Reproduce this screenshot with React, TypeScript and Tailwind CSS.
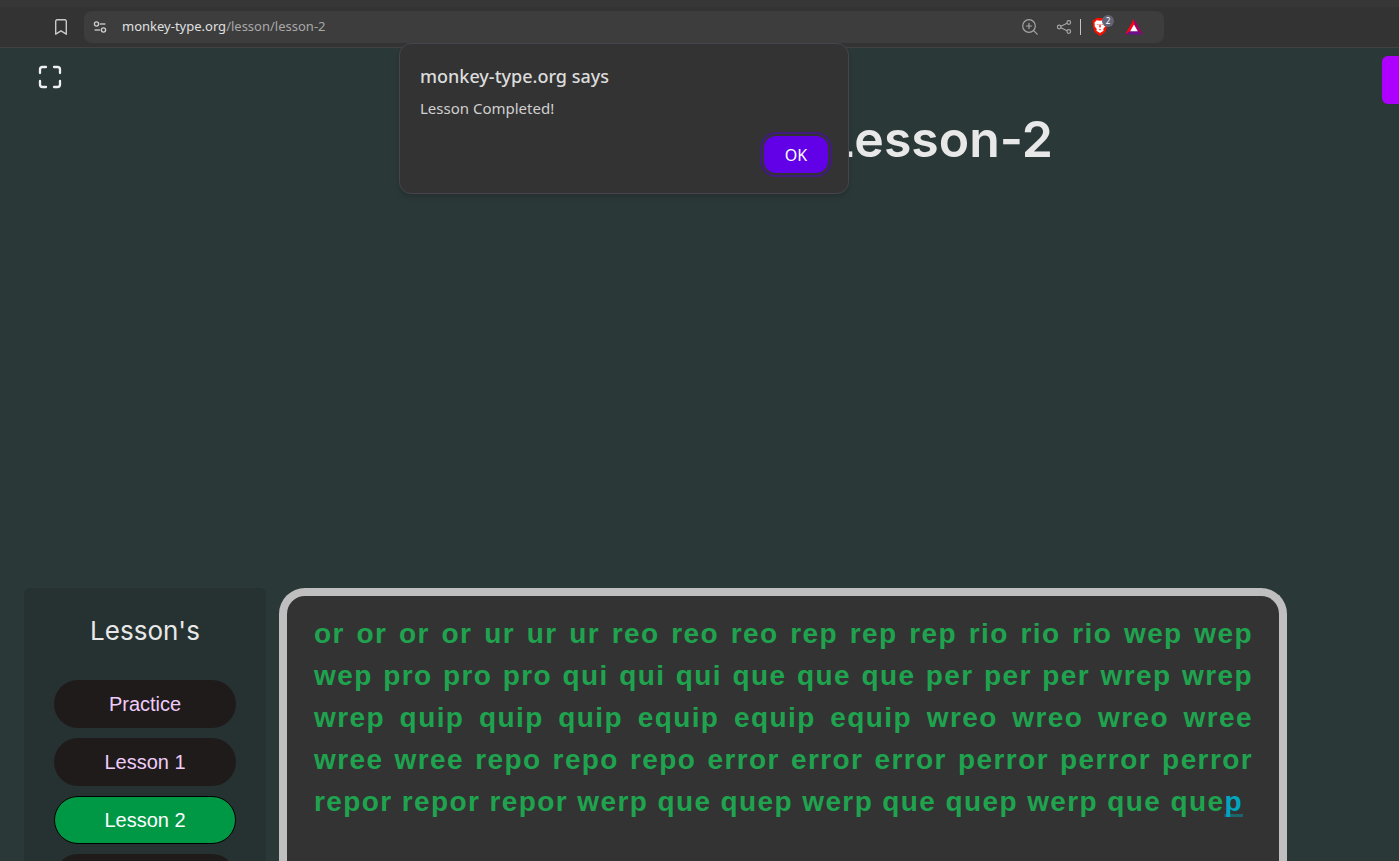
import React from "react";

const lessons = ["Practice", "Lesson 1", "Lesson 2", "Lesson 3"];
const active = "Lesson 2";

const typed =
  "or or or or ur ur ur reo reo reo rep rep rep rio rio rio wep wep wep pro pro pro qui qui qui que que que per per per wrep wrep wrep quip quip quip equip equip equip wreo wreo wreo wree wree wree repo repo repo error error error perror perror perror repor repor repor werp que quep werp que quep werp que que";

function BookmarkIcon() {
  return (
    <svg width="16" height="18" viewBox="0 0 16 18" fill="none" stroke="#c9c9c9" strokeWidth="1.4" strokeLinejoin="round" aria-hidden="true">
      <path d="M2.7 3.2a1.5 1.5 0 0 1 1.5-1.5h7.6a1.5 1.5 0 0 1 1.5 1.5v13L8 12.800l-5.300 3.400z" />
    </svg>
  );
}

function SiteSettingsIcon() {
  return (
    <svg width="14" height="14" viewBox="0 0 14 14" fill="none" stroke="#d0d0d0" strokeWidth="1.3" aria-hidden="true">
      <circle cx="3.5" cy="4" r="2.1" />
      <path d="M6.800 4h5.600" />
      <circle cx="10.5" cy="10" r="2.1" />
      <path d="M1.600 10h5.600" />
    </svg>
  );
}

function ZoomIcon() {
  return (
    <svg width="18" height="18" viewBox="0 0 18 18" fill="none" stroke="#a5a5a5" strokeWidth="1.2" strokeLinecap="round" aria-hidden="true">
      <circle cx="8" cy="8" r="6.3" />
      <path d="M12.600 12.600l3.600 3.600M8 5.400v5.200M5.400 8h5.200" />
    </svg>
  );
}

function ShareIcon() {
  return (
    <svg width="16" height="16" viewBox="0 0 16 16" fill="none" stroke="#a5a5a5" strokeWidth="1.2" aria-hidden="true">
      <circle cx="3.2" cy="8" r="1.8" />
      <circle cx="12.8" cy="3.5" r="1.8" />
      <circle cx="12.8" cy="12.5" r="1.8" />
      <path d="M4.900 7.200l6.200-2.900M4.900 8.800l6.200 2.900" />
    </svg>
  );
}

function BraveIcon() {
  return (
    <svg width="16" height="18" viewBox="0 0 16 18" aria-hidden="true">
      <path fill="#fb1000" d="M4.600 0h6.800l1.600 1.600 1.800.2.800 2.400-.6 1.600.2 2-1.600 5.400-1.400 1.800L8 18l-4.200-3-1.400-1.800L.8 7.800 1 5.800.4 4.200l.8-2.400 1.800-.2z" />
      <path fill="#fff" d="M4.600 2.200l3.400.6 3.400-.6 2.200 2.600-.4 1.900.2 1.500-2.200 2.800.4 1.800L8 15l-3.600-2.200.4-1.800-2.200-2.800.2-1.500-.4-1.900z" />
      <path fill="#fb1000" d="M4.600 6l2 .4-.4.900zM11.400 6l-2 .4.4.9zM7.500 6.200h1l.3 2.900-.8.700-.8-.7zM6.600 11.600L8 11.200l1.400.4L8 12.600z" />
    </svg>
  );
}

function BatIcon() {
  return (
    <svg width="18" height="16" viewBox="0 0 18 16" aria-hidden="true">
      <path fill="#ff0018" d="M9 0v6l-3.500 6L0 15.500z" />
      <path fill="#a3005f" d="M9 0l9 15.500-5.500-3.500L9 6z" />
      <path fill="#6f0f8c" d="M0 15.500L5.500 12h7l5.500 3.500z" />
      <path fill="#fff" d="M9 5.500l3.800 6.700H5.200z" />
    </svg>
  );
}

function FullscreenIcon() {
  return (
    <svg width="24" height="24" viewBox="0 0 24 24" fill="none" stroke="#f0f0f0" strokeWidth="2.3" strokeLinecap="round" strokeLinejoin="round" aria-hidden="true">
      <path d="M8 2H4.500a2.500 2.500 0 0 0-2.500 2.500V8M16 2h3.500a2.500 2.500 0 0 1 2.500 2.500V8M22 16v3.500a2.500 2.500 0 0 1-2.500 2.500H16M8 22H4.500a2.500 2.500 0 0 1-2.500-2.500V16" />
    </svg>
  );
}

function Alert() {
  return (
    <div
      role="alertdialog"
      aria-labelledby="alert-title"
      aria-describedby="alert-text"
      className="absolute left-1/2 top-8 z-10 flex w-[450px] -translate-x-1/2 flex-col rounded-xl border border-[#47444e] bg-[#333333] p-5 shadow-md"
    >
      <h2 id="alert-title" className="text-lg leading-6 font-medium text-[#dcdcdc]">
        monkey-type.org says
      </h2>
      <p id="alert-text" className="mt-2 text-[15px] leading-6 text-[#d0d0d0]">
        Lesson Completed!
      </p>
      <button className="mt-4 h-[37px] w-16 self-end rounded-xl bg-[#6200e8] text-base text-white outline-2 outline-offset-2 outline-[#421b80]">
        OK
      </button>
    </div>
  );
}

function Toolbar() {
  return (
    <header className="shrink-0 border-b border-[#424242] bg-[#333333] font-['Noto_Sans',sans-serif]">
      <div className="h-[7px] bg-[#373737]" />
      <div className="flex items-center py-1 pl-[53px]">
        <button aria-label="Bookmark this page">
          <BookmarkIcon />
        </button>
        <div className="relative mr-[235px] ml-[15px] flex h-8 flex-1 items-center rounded-lg bg-[#3d3d3d] pr-[21px] pl-[9px]">
          <button aria-label="Site information">
            <SiteSettingsIcon />
          </button>
          <a href="#lesson-2" className="ml-[15px] text-[13px] text-[#a8a8a8]">
            <span className="text-[#e0e0e0]">monkey-type.org</span>/lesson/lesson-2
          </a>
          <div className="ml-auto flex items-center">
            <button aria-label="Zoom" className="mr-[17px]">
              <ZoomIcon />
            </button>
            <button aria-label="Share" className="mr-2">
              <ShareIcon />
            </button>
            <div className="mr-[11px] h-4 w-px bg-[#c4c4c4]" />
            <button aria-label="Brave Shields" className="relative mr-[17px]">
              <BraveIcon />
              <span className="absolute -top-[3px] -right-[6px] flex size-3 items-center justify-center rounded-full bg-[#636375] text-[8px] leading-none text-white">
                2
              </span>
            </button>
            <button aria-label="Brave Rewards">
              <BatIcon />
            </button>
          </div>
          <Alert />
        </div>
      </div>
    </header>
  );
}

export default function App() {
  return (
    <div className="flex h-screen flex-col overflow-hidden bg-[#2b3838] font-['Liberation_Sans',Arial,sans-serif]">
      <Toolbar />
      <div className="flex shrink-0 items-start justify-between pt-2 pl-[38px]">
        <button aria-label="Full screen" className="mt-[9px]">
          <FullscreenIcon />
        </button>
        <button aria-label="Menu" className="h-12 w-[17px] rounded-l-md bg-[#ae00ff]" />
      </div>
      <h1 className="shrink-0 pr-[346px] text-right font-['Inter',sans-serif] text-[50px] leading-[70px] font-semibold text-[#e8e8e8]">
        Lesson-2
      </h1>
      <main className="mt-[414px] flex min-h-0 flex-1 items-stretch gap-[13px] pr-28 pl-6">
        <nav className="w-[242px] shrink-0 overflow-hidden rounded-t-md bg-[#263231] px-[30px] pt-6">
          <h2 className="text-center font-['Inter',sans-serif] text-[26px] leading-[38px] text-[#e8e8e8]">Lesson's</h2>
          <ul className="mt-[30px] flex flex-col gap-[10px]">
            {lessons.map((name) => (
              <li key={name}>
                <a
                  href="#lesson"
                  className={
                    name === active
                      ? "flex h-12 items-center justify-center rounded-full border border-black bg-[#009845] text-xl text-white"
                      : "flex h-12 items-center justify-center rounded-full bg-[#1f1b1b] text-xl text-[#f0ccfa]"
                  }
                >
                  {name}
                </a>
              </li>
            ))}
          </ul>
        </nav>
        <section className="min-w-0 flex-1 overflow-hidden rounded-t-[26px] border-8 border-b-0 border-[#bfbfbf] bg-[#333333] pt-[17px] pr-[26px] pl-[27px]">
          <p className="text-justify text-[28px] leading-[42px] font-bold tracking-wider text-[#1fa34f]">
            {typed}
            <span className="text-[#00a6c0] underline decoration-[#1c646d] decoration-3 underline-offset-3 [text-decoration-skip-ink:none]">
              p
            </span>
          </p>
        </section>
      </main>
    </div>
  );
}
